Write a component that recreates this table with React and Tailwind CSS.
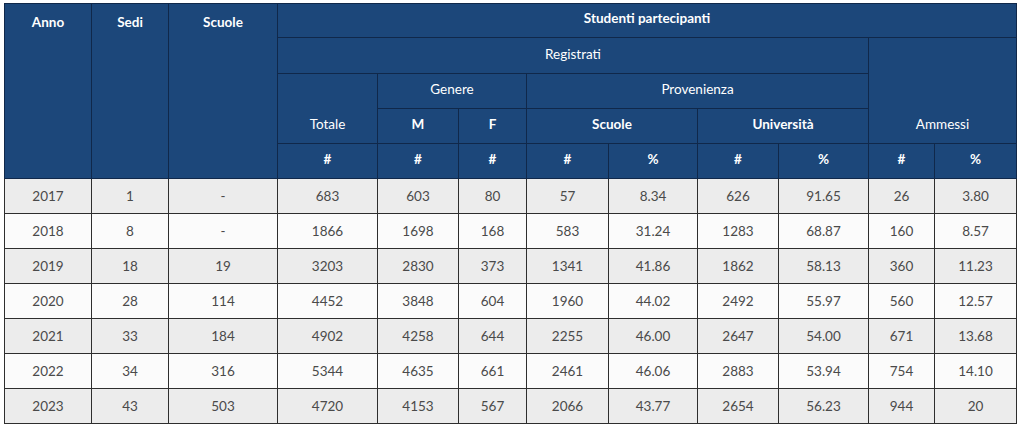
const righe = [
  ['2017', '1', '-', '683', '603', '80', '57', '8.34', '626', '91.65', '26', '3.80'],
  ['2018', '8', '-', '1866', '1698', '168', '583', '31.24', '1283', '68.87', '160', '8.57'],
  ['2019', '18', '19', '3203', '2830', '373', '1341', '41.86', '1862', '58.13', '360', '11.23'],
  ['2020', '28', '114', '4452', '3848', '604', '1960', '44.02', '2492', '55.97', '560', '12.57'],
  ['2021', '33', '184', '4902', '4258', '644', '2255', '46.00', '2647', '54.00', '671', '13.68'],
  ['2022', '34', '316', '5344', '4635', '661', '2461', '46.06', '2883', '53.94', '754', '14.10'],
  ['2023', '43', '503', '4720', '4153', '567', '2066', '43.77', '2654', '56.23', '944', '20'],
];

const larghezze = [87, 77, 109, 100, 81, 68, 82, 89, 81, 90, 66, 82];

const th = 'border border-[#10284a] px-2 text-center text-[13.5px] align-bottom pb-[9px]';

export default function App() {
  return (
    <div className="bg-white w-[1024px] h-[430px] pl-[4px] pt-[3px]" style={{ fontFamily: 'Lato, "Open Sans", sans-serif' }}>
      <table className="table-fixed border-collapse w-[1012px]">
        <colgroup>
          {larghezze.map((w, i) => <col key={i} style={{ width: w }} />)}
        </colgroup>
        <thead className="bg-[#1c477a] text-white">
          <tr className="h-[34px]">
            <th rowSpan={5} className={`${th} !align-top pt-[8px] font-bold`}>Anno</th>
            <th rowSpan={5} className={`${th} !align-top pt-[8px] font-bold`}>Sedi</th>
            <th rowSpan={5} className={`${th} !align-top pt-[8px] font-bold`}>Scuole</th>
            <th colSpan={9} className={`${th} font-bold`}>Studenti partecipanti</th>
          </tr>
          <tr className="h-[36px]">
            <th colSpan={7} className={`${th} font-normal`}>Registrati</th>
            <th colSpan={2} rowSpan={3} className={`${th} font-normal`}>Ammessi</th>
          </tr>
          <tr className="h-[35px]">
            <th rowSpan={2} className={`${th} font-normal`}>Totale</th>
            <th colSpan={2} className={`${th} font-normal`}>Genere</th>
            <th colSpan={4} className={`${th} font-normal`}>Provenienza</th>
          </tr>
          <tr className="h-[35px]">
            <th className={`${th} font-bold`}>M</th>
            <th className={`${th} font-bold`}>F</th>
            <th colSpan={2} className={`${th} font-bold`}>Scuole</th>
            <th colSpan={2} className={`${th} font-bold`}>Università</th>
          </tr>
          <tr className="h-[35px]">
            {['#', '#', '#', '#', '%', '#', '%', '#', '%'].map((s, i) => (
              <th key={i} className={`${th} font-bold`}>{s}</th>
            ))}
          </tr>
        </thead>
        <tbody className="text-[#4a4a4a] text-[13.5px]">
          {righe.map((r, i) => (
            <tr key={r[0]} className={`h-[35px] ${i % 2 === 0 ? 'bg-[#ececec]' : 'bg-[#fbfbfb]'}`}>
              {r.map((c, j) => (
                <td key={j} className="border border-[#2e2e2e] text-center align-middle px-2">{c}</td>
              ))}
            </tr>
          ))}
        </tbody>
      </table>
    </div>
  );
}
